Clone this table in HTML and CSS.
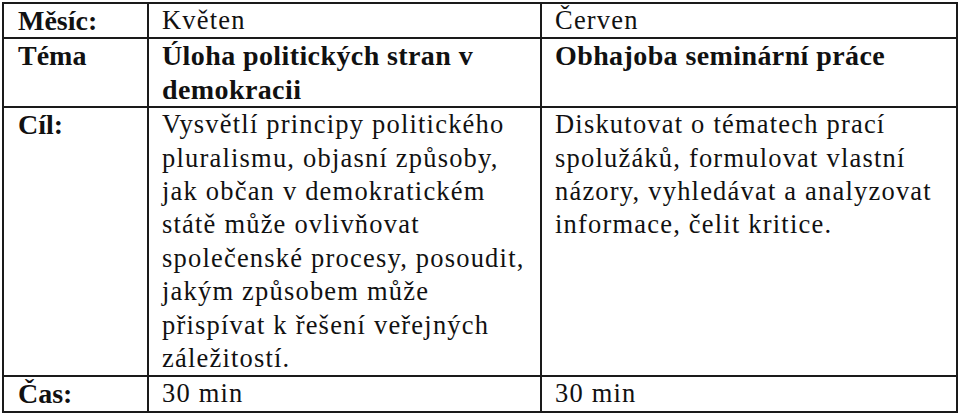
FILE: index.html
```html
<!DOCTYPE html>
<html lang="cs">
<head>
<meta charset="utf-8">
<title>Plán</title>
<link rel="stylesheet" href="styles.css">
</head>
<body>
<table class="plan">
  <colgroup>
    <col class="c1"><col class="c2"><col class="c3">
  </colgroup>
  <tr>
    <th>Měsíc:</th>
    <td>Květen</td>
    <td>Červen</td>
  </tr>
  <tr>
    <th>Téma</th>
    <td class="b">Úloha politických stran v<br>demokracii</td>
    <td class="b">Obhajoba seminární práce</td>
  </tr>
  <tr>
    <th>Cíl:</th>
    <td>Vysvětlí principy politického<br>pluralismu, objasní způsoby,<br>jak občan v demokratickém<br>státě může ovlivňovat<br>společenské procesy, posoudit,<br>jakým způsobem může<br>přispívat k řešení veřejných<br>záležitostí.</td>
    <td>Diskutovat o tématech prací<br>spolužáků, formulovat vlastní<br>názory, vyhledávat a analyzovat<br>informace, čelit kritice.</td>
  </tr>
  <tr>
    <th>Čas:</th>
    <td>30 min</td>
    <td>30 min</td>
  </tr>
</table>
</body>
</html>
```

FILE: styles.css
```css
html, body {
  margin: 0;
  background: #fff;
}
body {
  padding: 2px 0 0 2px;
  font-family: "Liberation Serif", "Times New Roman", serif;
  color: #111;
}
.plan {
  border-collapse: collapse;
  table-layout: fixed;
  width: 954px;
}
.c1 { width: 145px; }
.c2 { width: 393px; }
.c3 { width: 416px; }
.plan th,
.plan td {
  border: 2px solid #1a1a1a;
  padding: 0 10px 0 13px;
  vertical-align: top;
  text-align: left;
  line-height: 33.4px;
  white-space: nowrap;
}
.plan th {
  font-weight: bold;
  font-size: 28px;
  padding-left: 14px;
}
.plan td {
  font-size: 26.5px;
  letter-spacing: 1.2px;
}
.plan td.b {
  font-weight: bold;
  font-size: 28px;
  letter-spacing: 0.4px;
}
```
